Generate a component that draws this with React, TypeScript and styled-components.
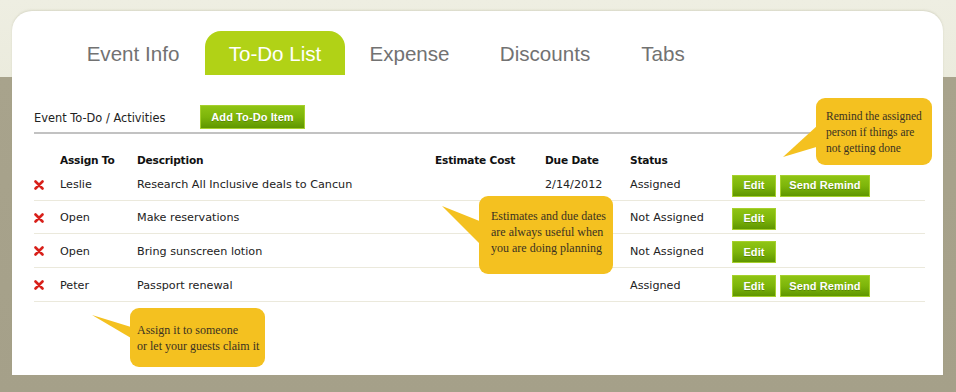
import React from "react";
import styled, { createGlobalStyle } from "styled-components";

const Global = createGlobalStyle`
  html, body { margin: 0; padding: 0; }
  body {
    background: linear-gradient(#eeeee2 0, #ebebdd 77px, #a8a38c 77px, #a5a089 100%);
    min-height: 392px;
    font-family: "DejaVu Sans", Verdana, sans-serif;
  }
`;

const Page = styled.div`
  padding: 11px 13px 17px 12px;
`;

const Card = styled.div`
  position: relative;
  width: 931px;
  height: 364px;
  background: #fff;
  border-radius: 20px 20px 0 0;
  box-shadow: 0 -1px 2px rgba(150, 150, 120, 0.25);
`;

const TabBar = styled.nav`
  display: flex;
  padding: 20px 0 0 49px;
`;

const Tab = styled.div<{ $active?: boolean; $w: number }>`
  width: ${(p) => p.$w}px;
  height: 44px;
  padding-top: 1px;
  box-sizing: border-box;
  display: flex;
  align-items: center;
  justify-content: center;
  white-space: nowrap;
  font-family: "Liberation Sans", Arial, sans-serif;
  font-size: 20.6px;
  color: ${(p) => (p.$active ? "#fff" : "#727272")};
  background: ${(p) => (p.$active ? "#b1d216" : "transparent")};
  border-radius: 16px 16px 0 0;
`;

const Section = styled.section`
  padding: 0 18px 0 22px;
`;

const SectionHead = styled.div`
  display: flex;
  align-items: center;
  height: 24px;
  margin-top: 30px;
`;

const SectionTitle = styled.div`
  width: 166px;
  font-size: 11.4px;
  color: #222;
  padding-top: 1px;
`;

const GreenButton = styled.button<{ $w: number; $h: number }>`
  width: ${(p) => p.$w}px;
  height: ${(p) => p.$h}px;
  padding: 0 0 1px;
  border: 1px solid #a6d02c;
  background: linear-gradient(#8fc414 0%, #7db50a 50%, #5f9600 100%);
  color: #fff;
  font-family: "Liberation Sans", Arial, sans-serif;
  font-weight: bold;
  font-size: 11px;
  letter-spacing: 0.1px;
  text-shadow: 0 1px 0 rgba(40, 70, 0, 0.35);
  cursor: pointer;
`;

const Divider = styled.div`
  margin-top: 3px;
  height: 2px;
  background: #c2c2c2;
`;

const cols = "26px 77px 298px 110px 85px 102px 1fr";

const HeadRow = styled.div`
  display: grid;
  grid-template-columns: ${cols};
  align-items: center;
  height: 16px;
  margin-top: 18px;
  font-size: 10.6px;
  letter-spacing: -0.2px;
  font-weight: bold;
  color: #111;
`;

const Row = styled.div<{ $h: number }>`
  display: grid;
  grid-template-columns: ${cols};
  align-items: center;
  height: ${(p) => p.$h}px;
  box-sizing: border-box;
  border-bottom: 1px solid #ebe9dc;
  font-size: 11.2px;
  color: #222;
  padding-top: 1px;
`;

const Actions = styled.div`
  display: flex;
  gap: 4px;
  padding-top: 2px;
`;

const Remove = styled.span`
  display: flex;
  align-items: center;
`;

const Callout = styled.div<{ $x: number; $y: number; $w: number; $h: number; $fs: number }>`
  position: absolute;
  left: ${(p) => p.$x}px;
  top: ${(p) => p.$y}px;
  width: ${(p) => p.$w}px;
  height: ${(p) => p.$h}px;
  box-sizing: border-box;
  background: #f4c120;
  border-radius: 9px;
  color: #3a3222;
  font-family: "Liberation Serif", "Times New Roman", serif;
  font-size: ${(p) => p.$fs}px;
  line-height: 16px;
`;

const CalloutText = styled.div<{ $pl: number; $pt: number }>`
  padding: ${(p) => p.$pt}px 4px 0 ${(p) => p.$pl}px;
`;

const Pointer = styled.svg`
  position: absolute;
  left: 0;
  top: 0;
  overflow: visible;
  pointer-events: none;
`;

const XIcon = () => (
  <svg width="10" height="10" viewBox="0 0 10 10">
    <path d="M1.5 1.5 L8.5 8.5 M8.5 1.5 L1.5 8.5" stroke="#d8201a" strokeWidth="2.6" strokeLinecap="round" />
  </svg>
);

type Item = { who: string; desc: string; cost: string; due: string; status: string; remind: boolean; h: number };

const items: Item[] = [
  { who: "Leslie", desc: "Research All Inclusive deals to Cancun", cost: "", due: "2/14/2012", status: "Assigned", remind: true, h: 33 },
  { who: "Open", desc: "Make reservations", cost: "", due: "", status: "Not Assigned", remind: false, h: 33 },
  { who: "Open", desc: "Bring sunscreen lotion", cost: "", due: "", status: "Not Assigned", remind: false, h: 34 },
  { who: "Peter", desc: "Passport renewal", cost: "", due: "", status: "Assigned", remind: true, h: 34 },
];

const tabs: { label: string; w: number }[] = [
  { label: "Event Info", w: 144 },
  { label: "To-Do List", w: 140 },
  { label: "Expense", w: 129 },
  { label: "Discounts", w: 142 },
  { label: "Tabs", w: 94 },
];

export default function App() {
  return (
    <Page>
      <Global />
      <Card>
        <TabBar>
          {tabs.map((t) => (
            <Tab key={t.label} $w={t.w} $active={t.label === "To-Do List"}>
              {t.label}
            </Tab>
          ))}
        </TabBar>
        <Section>
          <SectionHead>
            <SectionTitle>Event To-Do / Activities</SectionTitle>
            <GreenButton $w={105} $h={24}>Add To-Do Item</GreenButton>
          </SectionHead>
          <Divider />
          <HeadRow>
            <span />
            <span>Assign To</span>
            <span>Description</span>
            <span>Estimate Cost</span>
            <span>Due Date</span>
            <span>Status</span>
            <span />
          </HeadRow>
          {items.map((it, i) => (
            <Row key={i} $h={it.h}>
              <Remove>
                <XIcon />
              </Remove>
              <span>{it.who}</span>
              <span>{it.desc}</span>
              <span>{it.cost}</span>
              <span>{it.due}</span>
              <span>{it.status}</span>
              <Actions>
                <GreenButton $w={44} $h={22}>Edit</GreenButton>
                {it.remind && (
                  <GreenButton $w={90} $h={22}>Send Remind</GreenButton>
                )}
              </Actions>
            </Row>
          ))}
        </Section>

        <Pointer width="931" height="364">
          <polygon points="771,146 806,114 811,134" fill="#f4c120" />
          <polygon points="430,195 470,211 470,235" fill="#f4c120" />
          <polygon points="80,304 119,316 119,327" fill="#f4c120" />
        </Pointer>
        <Callout $x={804} $y={87} $w={116} $h={67} $fs={11.5}>
          <CalloutText $pl={10} $pt={10}>
            Remind the assigned
            <br />
            person if things are
            <br />
            not getting done
          </CalloutText>
        </Callout>
        <Callout $x={467} $y={185} $w={134} $h={78} $fs={12}>
          <CalloutText $pl={12} $pt={12}>
            Estimates and due dates
            <br />
            are always useful when
            <br />
            you are doing planning
          </CalloutText>
        </Callout>
        <Callout $x={118} $y={297} $w={135} $h={59} $fs={12}>
          <CalloutText $pl={7} $pt={14}>
            Assign it to someone
            <br />
            or let your guests claim it
          </CalloutText>
        </Callout>
      </Card>
    </Page>
  );
}
